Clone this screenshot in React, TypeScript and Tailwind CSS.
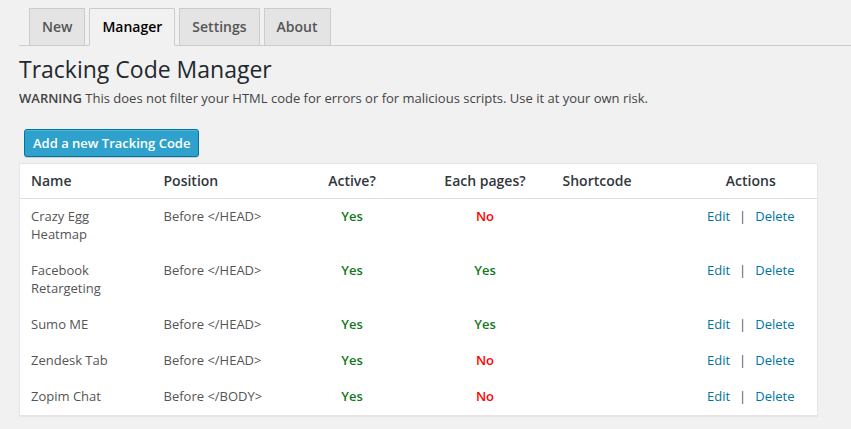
import React from 'react'

interface Row {
  name: string
  position: string
  active: boolean
  each: boolean
}

const ROWS: Row[] = [
  { name: 'Crazy Egg Heatmap', position: 'Before </HEAD>', active: true, each: false },
  { name: 'Facebook Retargeting', position: 'Before </HEAD>', active: true, each: true },
  { name: 'Sumo ME', position: 'Before </HEAD>', active: true, each: true },
  { name: 'Zendesk Tab', position: 'Before </HEAD>', active: true, each: false },
  { name: 'Zopim Chat', position: 'Before </BODY>', active: true, each: false },
]

const TABS = ['New', 'Manager', 'Settings', 'About']

function YesNo({ value }: { value: boolean }) {
  return value ? (
    <span className="font-semibold text-[#11771a]">Yes</span>
  ) : (
    <span className="font-semibold text-[#ff0000]">No</span>
  )
}

export default function App() {
  return (
    <div
      className="min-h-screen bg-[#f1f1f1] pl-[19px] pr-[33px] text-[13px] text-[#444]"
      style={{ fontFamily: "'Open Sans', 'Noto Sans', sans-serif" }}
    >
      {/* Tabs */}
      <div className="flex gap-[4px] border-b border-[#ccc] pt-[8px] pl-[10px] mr-[-33px]">
        {TABS.map(t => {
          const active = t === 'Manager'
          return (
            <div
              key={t}
              className={
                active
                  ? 'mb-[-1px] border border-[#ccc] border-b-[#f1f1f1] bg-[#f1f1f1] px-[12px] py-[6px] text-[14px] font-semibold leading-[24px] text-black'
                  : 'mb-[-1px] border border-[#ccc] bg-[#e4e4e4] px-[12px] py-[6px] text-[14px] font-semibold leading-[24px] text-[#555]'
              }
            >
              {t}
            </div>
          )
        })}
      </div>

      {/* Header */}
      <h2 className="mt-[9px] text-[23px] leading-[29px] font-normal text-[#23282d]">Tracking Code Manager</h2>
      <p className="mt-[5px] leading-[18px]">
        <b className="font-semibold">WARNING</b> This does not filter your HTML code for errors or for malicious scripts. Use it at your own risk.
      </p>

      <button className="ml-[5px] mt-[22px] h-[28px] rounded-[3px] border border-[#0074a2] bg-[#2ea2cc] px-[8px] text-[13px] font-semibold leading-[26px] text-white shadow-[inset_0_1px_0_rgba(120,200,230,0.5),0_1px_0_rgba(0,0,0,0.15)]">
        Add a new Tracking Code
      </button>

      {/* Table */}
      <table className="mt-[6px] w-[799px] table-fixed border-collapse border border-[#e5e5e5] bg-white shadow-[0_1px_1px_rgba(0,0,0,0.04)]">
        <thead>
          <tr className="border-b border-[#e1e1e1]">
            <th className="px-[11px] py-[8px] text-left text-[14px] font-semibold leading-[18px] text-[#32373c]">Name</th>
            <th className="px-[11px] py-[8px] text-left text-[14px] font-semibold leading-[18px] text-[#32373c]">Position</th>
            <th className="px-[11px] py-[8px] text-center text-[14px] font-semibold leading-[18px] text-[#32373c]">Active?</th>
            <th className="px-[11px] py-[8px] text-center text-[14px] font-semibold leading-[18px] text-[#32373c]">Each pages?</th>
            <th className="px-[11px] py-[8px] text-left text-[14px] font-semibold leading-[18px] text-[#32373c]">Shortcode</th>
            <th className="px-[11px] py-[8px] text-center text-[14px] font-semibold leading-[18px] text-[#32373c]">Actions</th>
          </tr>
        </thead>
        <tbody>
          {ROWS.map(r => (
            <tr key={r.name} className="align-top leading-[18px]">
              <td className="px-[11px] pt-[8px] pb-[10px] text-[#555]">{r.name}</td>
              <td className="px-[11px] pt-[8px] pb-[10px] text-[#555]">{r.position}</td>
              <td className="px-[11px] pt-[8px] pb-[10px] text-center"><YesNo value={r.active} /></td>
              <td className="px-[11px] pt-[8px] pb-[10px] text-center"><YesNo value={r.each} /></td>
              <td className="px-[11px] pt-[8px] pb-[10px]"></td>
              <td className="px-[11px] pt-[8px] pb-[10px] text-center text-[#555]">
                <a className="text-[#0074a2]">Edit</a>
                <span className="mx-[9px]">|</span>
                <a className="text-[#0074a2]">Delete</a>
              </td>
            </tr>
          ))}
        </tbody>
      </table>
    </div>
  )
}
